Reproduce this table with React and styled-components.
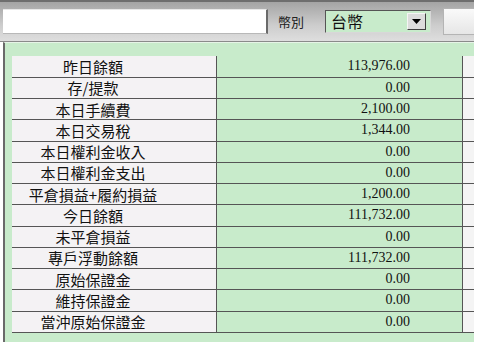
import React from 'react';
import styled, { createGlobalStyle } from 'styled-components';

const GlobalStyle = createGlobalStyle`
  body {
    margin: 0;
    background: #ffffff;
    font-family: "Noto Sans CJK TC", "Liberation Sans", sans-serif;
  }
`;

const Frame = styled.div`
  width: 474px;
  height: 342px;
  display: flex;
  flex-direction: column;
  overflow: hidden;
`;

const Toolbar = styled.div`
  height: 42px;
  box-sizing: border-box;
  border-top: 2px solid #6e6e6e;
  border-bottom: 1px solid #8a8a8a;
  background: linear-gradient(#a4a4a4, #cdcdcd 60%, #dedede);
  display: flex;
  align-items: center;
  padding: 0 0 1px 3px;
  flex-shrink: 0;
`;

const SearchInput = styled.div`
  width: 265px;
  height: 25px;
  box-sizing: border-box;
  background: #ffffff;
  border-right: 2px solid #6a6a6a;
  border-bottom: 1px solid #b8b8b8;
  border-top: 1px solid #e8e8e8;
`;

const FieldLabel = styled.span`
  margin-left: 10px;
  width: 47px;
  font-size: 13px;
  color: #222;
  line-height: 1;
`;

const Select = styled.div`
  width: 106px;
  height: 23px;
  box-sizing: border-box;
  border-top: 1px solid #555;
  border-left: 1px solid #555;
  border-right: 1px solid #d8d8d8;
  border-bottom: 1px solid #d8d8d8;
  background: #c8ebcb;
  display: flex;
  align-items: center;
  justify-content: space-between;
  padding: 0 4px 0 5px;
`;

const SelectValue = styled.span`
  font-size: 16px;
  color: #111;
  line-height: 1;
`;

const DropButton = styled.div`
  width: 19px;
  height: 17px;
  box-sizing: border-box;
  background: #dcdcdc;
  border: 1px solid;
  border-color: #f4f4f4 #404040 #404040 #f4f4f4;
  display: flex;
  align-items: center;
  justify-content: center;
`;

const ToolButton = styled.div`
  margin-left: 12px;
  flex: 1;
  height: 27px;
  box-sizing: border-box;
  background: linear-gradient(#fafafa, #e6e6e6);
  border: 1px solid #b4b4b4;
  border-right: none;
`;

const Panel = styled.div`
  flex: 1;
  margin-left: 3px;
  border-left: 2px solid #6a6a6a;
  border-top: 1px solid #e6f4e7;
  background: #c8ebcb;
  padding: 13px 0 0 7px;
`;

const Table = styled.table`
  border-collapse: collapse;
  width: 100%;
  table-layout: fixed;
`;

const Row = styled.tr`
  height: 21.25px;
  border-bottom: 1px solid #555;
`;

const LabelCell = styled.td`
  width: 162px;
  padding: 0 42px 0 0;
  background: #f4f2f4;
  border-right: 1px solid #555;
  text-align: center;
  font-size: 15px;
  color: #111;
  line-height: 1;
  white-space: nowrap;
`;

const ValueCell = styled.td`
  width: 193px;
  padding: 0 52px 0 0;
  background: #c8ebcb;
  border-right: 1px solid #555;
  text-align: right;
  font-family: "Liberation Serif", serif;
  font-size: 14px;
  color: #111;
  line-height: 1;
`;

const EmptyCell = styled.td`
  background: #f4f4f4;
  padding: 0;
`;

const rows = [
  ['昨日餘額', '113,976.00'],
  ['存/提款', '0.00'],
  ['本日手續費', '2,100.00'],
  ['本日交易稅', '1,344.00'],
  ['本日權利金收入', '0.00'],
  ['本日權利金支出', '0.00'],
  ['平倉損益+履約損益', '1,200.00'],
  ['今日餘額', '111,732.00'],
  ['未平倉損益', '0.00'],
  ['專戶浮動餘額', '111,732.00'],
  ['原始保證金', '0.00'],
  ['維持保證金', '0.00'],
  ['當沖原始保證金', '0.00'],
];

const App = () => (
  <>
    <GlobalStyle />
    <Frame>
      <Toolbar>
        <SearchInput />
        <FieldLabel>幣別</FieldLabel>
        <Select>
          <SelectValue>台幣</SelectValue>
          <DropButton>
            <svg width="9" height="5" viewBox="0 0 9 5">
              <path d="M0 0h9L4.5 5z" fill="#000" />
            </svg>
          </DropButton>
        </Select>
        <ToolButton />
      </Toolbar>
      <Panel>
        <Table>
          <tbody>
            {rows.map(([label, value]) => (
              <Row key={label}>
                <LabelCell>{label}</LabelCell>
                <ValueCell>{value}</ValueCell>
                <EmptyCell />
              </Row>
            ))}
          </tbody>
        </Table>
      </Panel>
    </Frame>
  </>
);

export default App;
